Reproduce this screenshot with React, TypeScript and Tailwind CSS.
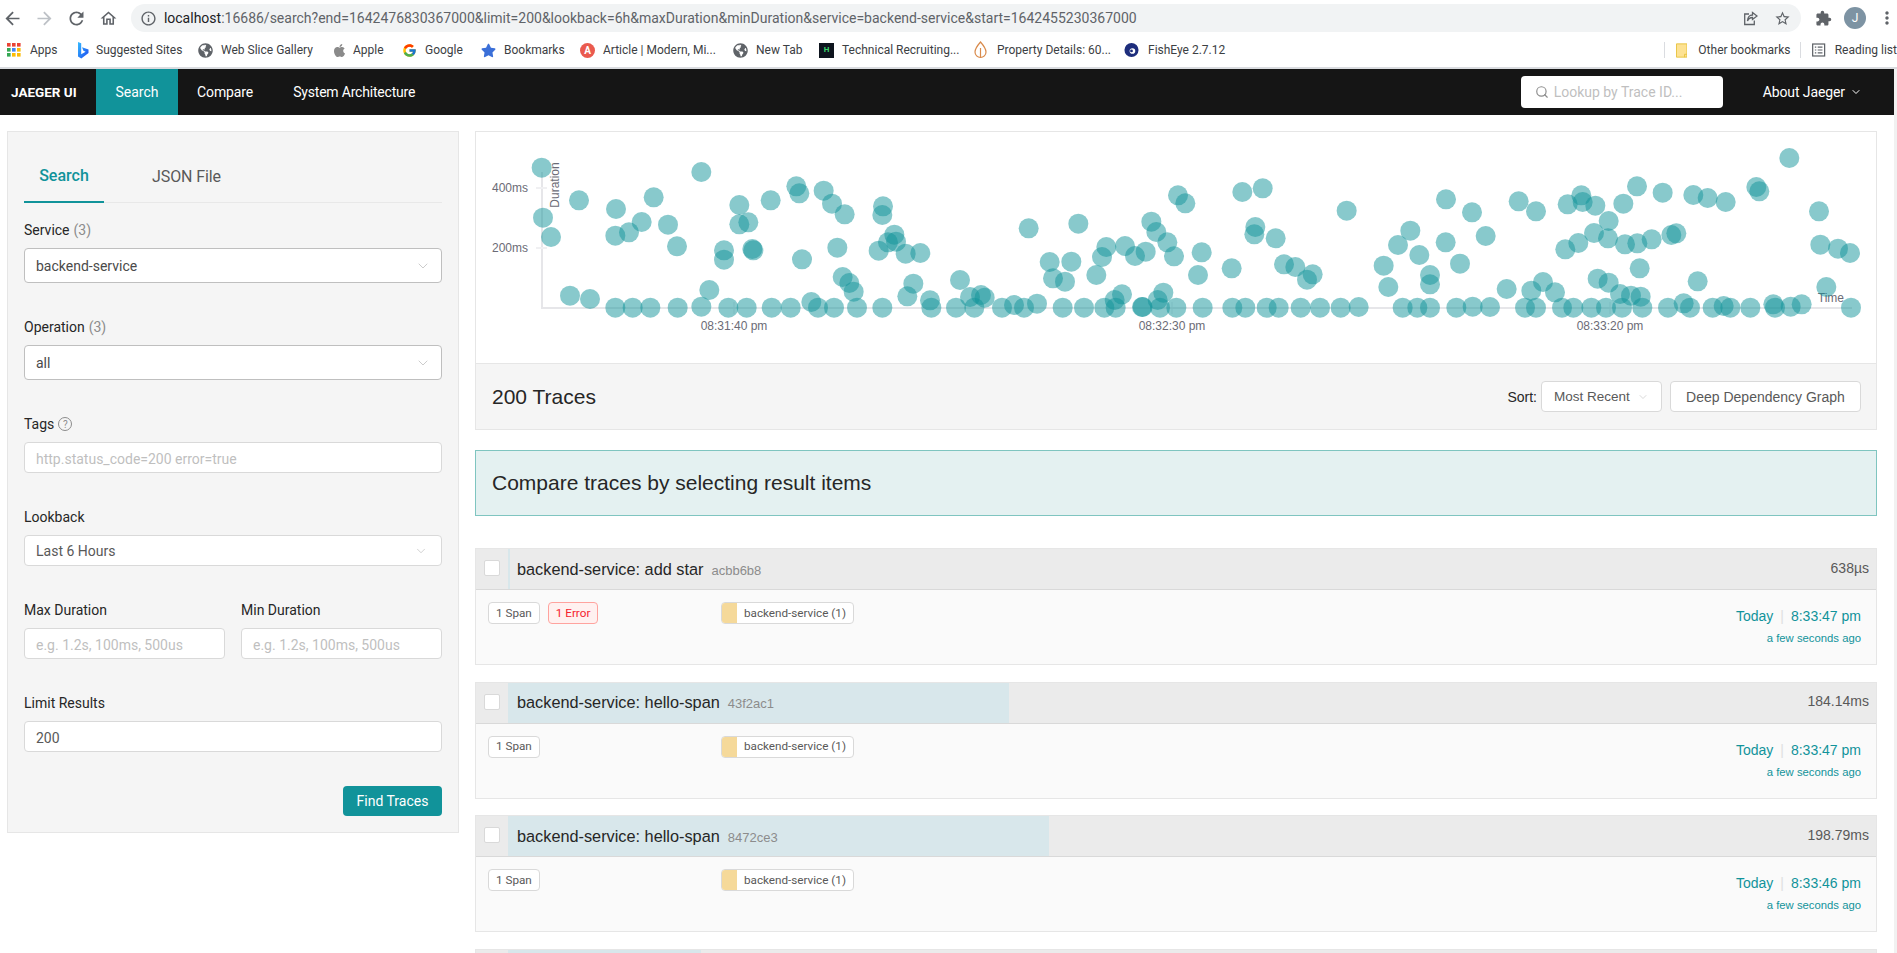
import { ChevronDown, Search } from 'lucide-react';
import { FaApple, FaGlobeAmericas, FaStar } from 'react-icons/fa';
import { FcGoogle } from 'react-icons/fc';
import { MdArrowBack, MdArrowForward, MdExtension, MdInfoOutline, MdMoreVert, MdOutlineHome, MdRefresh, MdStarBorder } from 'react-icons/md';

const ARIAL = "font-['Liberation_Sans',Arial,sans-serif]";

const AppsIcon = () => (
  <svg width="14" height="14" viewBox="0 0 14 14">
    {[0, 5, 10].map((y, r) =>
      [0, 5, 10].map((x, c) => (
        <rect key={`${r}${c}`} x={x} y={y} width="3.6" height="3.6" fill={['#ea4335', '#ea4335', '#ea4335', '#34a853', '#4285f4', '#fbbc05', '#34a853', '#fbbc05', '#fbbc05'][r * 3 + c]} />
      ))
    )}
  </svg>
);

const BingIcon = () => (
  <svg width="12" height="17" viewBox="0 0 12 17">
    <defs>
      <linearGradient id="bing" x1="0" y1="0" x2="1" y2="1">
        <stop offset="0" stopColor="#37bdff" />
        <stop offset="1" stopColor="#1b48ef" />
      </linearGradient>
    </defs>
    <path d="M1 0l3.200 1.200v11l4.400-2.500-2.200-1L5 5.200l6.500 2.300v3.600L4.300 16.500 1 14.500z" fill="url(#bing)" />
  </svg>
);

const LetterIcon = () => (
  <span className="w-[15px] h-[15px] rounded-full bg-[#ea5a4e] text-white text-[10px] font-bold flex items-center justify-center">A</span>
);

const HrIcon = () => (
  <span className="w-[15px] h-[15px] bg-[#0e141e] text-[#39d36b] text-[8px] font-bold flex items-center justify-center">H</span>
);

const LeafIcon = () => (
  <svg width="15" height="18" viewBox="0 0 15 18" fill="none" stroke="#d98a4b" strokeWidth="1.200">
    <path d="M7.500 1C4 5 2 8 2 11a5.500 5.500 0 0 0 11 0C13 8 11 5 7.500 1z" />
    <path d="M7.500 17V7" />
  </svg>
);

const FishIcon = () => (
  <svg width="16" height="18" viewBox="0 0 16 18">
    <circle cx="8" cy="9" r="7.500" fill="#1d2d7c" />
    <circle cx="9" cy="10" r="3" fill="#fff" />
    <circle cx="8" cy="10" r="1.500" fill="#1d2d7c" />
  </svg>
);

const ShareIcon = () => (
  <svg width="15" height="15" viewBox="0 0 15 15" fill="none" stroke="#5f6368" strokeWidth="1.300" className="ml-auto">
    <path d="M6 3H1.700v10.500h9.600V9.500" />
    <path d="M9.500 1.500L14 5l-4.500 3.500V6.500C7 6.500 5.500 7.500 4.500 10c0-3.500 2-6 5-6z" />
  </svg>
);

const ReadingIcon = () => (
  <svg width="14" height="14" viewBox="0 0 14 14" fill="none" stroke="#5f6368" strokeWidth="1.300" className="ml-[11px]">
    <rect x="0.700" y="0.700" width="12.600" height="12.600" />
    <path d="M3 4h1.500M3 7h1.500M3 10h1.500M6 4h5M6 7h5M6 10h5" />
  </svg>
);

const FolderIcon = () => (
  <svg width="12" height="15" viewBox="0 0 12 15" className="ml-[11px]">
    <path d="M.5.500h11v14H.5z" fill="#fde293" stroke="#e8c33f" />
    <path d="M9 14.500V11.500h2.500" fill="none" stroke="#e8c33f" />
  </svg>
);

const bookmarks = [
  { label: 'Apps', width: 'w-[69px]', gap: 'gap-[9px]', icon: <AppsIcon /> },
  { label: 'Suggested Sites', width: 'w-[123px]', gap: 'gap-[6px]', icon: <BingIcon /> },
  { label: 'Web Slice Gallery', width: 'w-[134px]', gap: 'gap-[8px]', icon: <FaGlobeAmericas size={15} color="#5f6368" /> },
  { label: 'Apple', width: 'w-[70px]', gap: 'gap-[6px]', icon: <FaApple size={15} color="#8a8a8a" /> },
  { label: 'Google', width: 'w-[79px]', gap: 'gap-[8px]', icon: <FcGoogle size={15} /> },
  { label: 'Bookmarks', width: 'w-[99px]', gap: 'gap-[8px]', icon: <FaStar size={15} color="#3b6fd8" /> },
  { label: 'Article | Modern, Mi...', width: 'w-[153px]', gap: 'gap-[8px]', icon: <LetterIcon /> },
  { label: 'New Tab', width: 'w-[86px]', gap: 'gap-[8px]', icon: <FaGlobeAmericas size={15} color="#5f6368" /> },
  { label: 'Technical Recruiting...', width: 'w-[154px]', gap: 'gap-[8px]', icon: <HrIcon /> },
  { label: 'Property Details: 60...', width: 'w-[151px]', gap: 'gap-[9px]', icon: <LeafIcon /> },
  { label: 'FishEye 2.7.12', width: 'w-[120px]', gap: 'gap-[9px]', icon: <FishIcon /> },
];

const BrowserChrome = () => (
  <div className="h-[69px] bg-white border-b-2 border-[#dadce0]">
    <div className="h-[36px] flex items-center text-[#5f6368]">
      <MdArrowBack size={21} className="ml-[2px]" />
      <MdArrowForward size={21} className="ml-[11px] text-[#bdc1c6]" />
      <MdRefresh size={21} className="ml-[11px]" />
      <MdOutlineHome size={19} className="ml-[12px]" />
      <div className="ml-[13px] w-[1672px] h-[28px] rounded-full bg-[#f1f3f4] flex items-center pl-[9px] pr-[10px]">
        <MdInfoOutline size={17} />
        <span className="ml-[7px] text-[14px] text-[#5f6368] whitespace-nowrap">
          <span className="text-[#202124]">localhost</span>:16686/search?end=1642476830367000&amp;limit=200&amp;lookback=6h&amp;maxDuration&amp;minDuration&amp;service=backend-service&amp;start=1642455230367000
        </span>
        <ShareIcon />
        <MdStarBorder size={17} className="ml-[16px]" />
      </div>
      <MdExtension size={17} className="ml-[14px]" />
      <span className="ml-[12px] w-[22px] h-[22px] rounded-full bg-[#7d93a3] text-white text-[12px] flex items-center justify-center">J</span>
      <MdMoreVert size={20} className="ml-[11px] shrink-0" />
    </div>
    <div className="h-[28px] flex items-center pl-[6px] text-[12px] text-[#3c4043] whitespace-nowrap">
      {bookmarks.map((b) => (
        <div key={b.label} className={`${b.width} ${b.gap} flex items-center shrink-0`}>
          <span className="w-[15px] flex justify-center">{b.icon}</span>
          <span>{b.label}</span>
        </div>
      ))}
      <span className="ml-[420px] w-px h-[16px] bg-[#dadce0]" />
      <FolderIcon />
      <span className="ml-[11px]">Other bookmarks</span>
      <span className="ml-[10px] w-px h-[16px] bg-[#dadce0]" />
      <ReadingIcon />
      <span className="ml-[9px]">Reading list</span>
    </div>
  </div>
);

const TopNav = () => (
  <div className="h-[46px] bg-[#151515] flex items-center text-white text-[14px]">
    <div className="w-[96px] pl-[11px] font-bold text-[13.500px]">JAEGER UI</div>
    <div className="h-full bg-[#11939a] w-[82px] flex items-center justify-center">Search</div>
    <div className="pl-[19px] pr-[20px] tracking-[-0.1px]">Compare</div>
    <div className="pl-[20px] tracking-[-0.2px]">System Architecture</div>
    <div className="ml-auto w-[202px] h-[32px] bg-white rounded-[4px] flex items-center pl-[14px] text-[#bfbfbf]">
      <Search size={14} className="text-[#8c8c8c]" />
      <span className="ml-[5px]">Lookup by Trace ID...</span>
    </div>
    <div className="ml-[40px] mr-[32px] flex items-center gap-[5px] tracking-[-0.1px]">
      About Jaeger
      <ChevronDown size={12} />
    </div>
  </div>
);

const Field = ({ label, count, children, className = '' }: { label: string; count?: string; children: React.ReactNode; className?: string }) => (
  <div className={className}>
    <div className="h-[22px] mb-[7px] flex items-center text-[14px] text-[#262626]">
      {label}
      {count && <span className="ml-[4px] text-[#8c8c8c]">{count}</span>}
      {label === 'Tags' && (
        <span className="ml-[4px] w-[14px] h-[14px] rounded-full border border-[#8c8c8c] text-[#8c8c8c] text-[10px] flex items-center justify-center">?</span>
      )}
    </div>
    {children}
  </div>
);

const SelectBox = ({ value, tall, muted }: { value: string; tall?: boolean; muted?: boolean }) => (
  <div className={`${tall ? 'h-[35px] pl-[11px] pr-[10px]' : 'h-[31px] pl-[11px] pr-[13px]'} ${muted ? 'text-[#595959] border-[#d9d9d9]' : 'text-[#4a4a4a] border-[#bfbfbf]'} bg-white border rounded-[4px] flex items-center justify-between text-[14px]`}>
    <span className="pt-[1px]">{value}</span>
    <ChevronDown size={tall ? 16 : 14} strokeWidth={1.200} className="text-[#bfbfbf]" />
  </div>
);

const TextBox = ({ placeholder, value }: { placeholder?: string; value?: string }) => (
  <input
    readOnly
    placeholder={placeholder}
    value={value ?? ''}
    className="w-full h-[31px] bg-white border border-[#d9d9d9] rounded-[4px] px-[11px] pt-[2px] text-[14px] text-[#595959] placeholder:text-[#bfbfbf] outline-none"
  />
);

const SearchPanel = () => (
  <div className="w-[452px] h-[702px] shrink-0 bg-[#f5f5f5] border border-[#e6e6e6] px-[16px]">
    <div className="mt-[28px] h-[43px] flex border-b border-[#e8e8e8] text-[16px]">
      <div className="w-[80px] h-[43px] border-b-2 border-[#11939a] text-[#11939a] font-medium flex items-center justify-center pb-[9px]">Search</div>
      <div className="ml-[48px] text-[#595959] flex items-center pb-[9px] h-[43px] tracking-[-0.1px]">JSON File</div>
    </div>
    <Field label="Service" count="(3)" className="mt-[16px]">
      <SelectBox value="backend-service" tall />
    </Field>
    <Field label="Operation" count="(3)" className="mt-[33px]">
      <SelectBox value="all" tall />
    </Field>
    <Field label="Tags" className="mt-[33px]">
      <TextBox placeholder="http.status_code=200 error=true" />
    </Field>
    <Field label="Lookback" className="mt-[33px]">
      <SelectBox value="Last 6 Hours" muted />
    </Field>
    <div className="mt-[33px] grid grid-cols-2 gap-[16px]">
      <Field label="Max Duration">
        <TextBox placeholder="e.g. 1.2s, 100ms, 500us" />
      </Field>
      <Field label="Min Duration">
        <TextBox placeholder="e.g. 1.2s, 100ms, 500us" />
      </Field>
    </div>
    <Field label="Limit Results" className="mt-[33px]">
      <TextBox value="200" />
    </Field>
    <div className="mt-[34px] flex justify-end">
      <button className="w-[99px] h-[30px] bg-[#11939a] text-white text-[14px] rounded-[4px]">Find Traces</button>
    </div>
  </div>
);

// dot centres read off at 3x, one list per horizontal slice of the chart
const dotsLeft = [
  [215, 128], [219, 278], [243, 336], [327, 226], [300, 512], [360, 522], [438, 252], [436, 332], [477, 322], [515, 291], [551, 217], [594, 299], [621, 364], [694, 141], [808, 240], [808, 298], [835, 292], [762, 376], [762, 404], [847, 372], [850, 376], [902, 226], [979, 184], [988, 205], [1061, 197], [1086, 236], [1124, 268], [1239, 244], [1237, 270], [1102, 368], [996, 403], [1226, 377], [1254, 352], [1273, 329], [1278, 350], [1307, 386], [1351, 384], [1118, 456], [1138, 474], [1151, 500], [1330, 476], [1312, 514], [1380, 526], [1384, 548], [718, 495], [1024, 531],
  [436, 548], [488, 548], [541, 548], [623, 548], [694, 545], [775, 548], [830, 548], [905, 548], [962, 548], [1044, 548], [1092, 548], [1161, 548], [1237, 548],
];
const dotsMiddle = [
  [18, 548], [73, 548], [156, 548], [222, 548], [338, 548], [402, 548], [463, 548], [497, 548], [576, 546], [578, 546], [630, 548], [679, 548], [758, 548], [847, 548], [886, 548], [950, 548], [986, 548], [1052, 548], [1110, 548], [1172, 548], [1226, 546], [1358, 548], [1402, 548], [1440, 548],
  [30, 465], [60, 516], [93, 510], [104, 518], [192, 540], [261, 536], [494, 525], [516, 508], [623, 525], [640, 503], [236, 310], [385, 296], [299, 411], [364, 410], [309, 460], [345, 470], [439, 450], [456, 396], [469, 366], [525, 363], [555, 393], [587, 380], [604, 290], [619, 321], [652, 352], [672, 394], [684, 211], [706, 235], [755, 382], [744, 450], [845, 430], [877, 201], [938, 190], [916, 306], [913, 328], [977, 340], [1002, 418], [1036, 426], [1071, 464], [1088, 448], [1190, 257], [1301, 422], [1315, 486], [1344, 360], [1381, 317], [1408, 390], [1440, 450], [1440, 478],
];
const dotsRight = [
  [79, 548], [128, 545], [180, 546], [285, 548], [318, 548], [396, 548], [430, 548], [484, 548], [528, 548], [576, 548], [637, 548], [714, 548], [780, 548], [848, 548], [881, 543], [901, 548], [961, 548], [1035, 548], [1082, 545], [1115, 538], [1263, 548],
  [48, 223], [126, 262], [47, 352], [167, 333], [90, 416], [230, 492], [304, 497], [339, 471], [375, 502], [266, 229], [318, 259], [413, 238], [454, 211], [458, 231], [496, 242], [536, 288], [580, 236], [621, 184], [698, 203], [790, 210], [833, 219], [887, 231], [979, 186], [988, 199], [1078, 99], [1167, 259], [1171, 359], [1224, 371], [1260, 384], [406, 373], [445, 354], [492, 324], [534, 340], [585, 358], [622, 355], [665, 343], [724, 330], [739, 325], [629, 430], [803, 469], [503, 461], [536, 473], [570, 507], [603, 512], [632, 515], [761, 535], [1030, 538], [1189, 486],
];

// slice origin in page x, minus the card's own left edge
const toChart = (list: number[][], originX: number) =>
  list.map(([x, y]) => ({ x: originX - 476 + x / 3, y: 125 - 132 + y / 3 }));

const dots = [...toChart(dotsLeft, 470), ...toChart(dotsMiddle, 950), ...toChart(dotsRight, 1430)];

const Chart = () => (
  <div className="h-[233px] bg-white border border-[#e6e6e6]">
    <svg width="1400" height="231" className={`block ${ARIAL}`} fontSize="12" fill="#6b6b76">
      <line x1="66" y1="40" x2="66" y2="177" stroke="#e6e6e9" strokeWidth="2" />
      <line x1="66" y1="176" x2="1376" y2="176" stroke="#e6e6e9" strokeWidth="2" />
      <line x1="60" y1="56" x2="71" y2="56" stroke="#f0f0f2" strokeWidth="2" />
      <line x1="60" y1="116" x2="71" y2="116" stroke="#f0f0f2" strokeWidth="2" />
      <text x="52" y="60" textAnchor="end">400ms</text>
      <text x="52" y="120" textAnchor="end">200ms</text>
      <text transform="translate(83 53) rotate(-90)" textAnchor="middle">Duration</text>
      <text x="1368" y="170" textAnchor="end">Time</text>
      {[258, 696, 1134].map((x, i) => (
        <g key={x}>
          <line x1={x} y1="170" x2={x} y2="182" stroke="#e6e6e9" />
          <text x={x} y="198" textAnchor="middle">{['08:31:40 pm', '08:32:30 pm', '08:33:20 pm'][i]}</text>
        </g>
      ))}
      {dots.map((d, i) => (
        <circle key={i} cx={d.x} cy={d.y} r="10" fill="#11939a" fillOpacity="0.5" />
      ))}
    </svg>
  </div>
);

const TracesHeader = () => (
  <div className="h-[66px] bg-[#f5f5f5] border-x border-b border-[#e6e6e6] flex items-center pl-[16px] pr-[15px]">
    <span className={`${ARIAL} text-[21px] text-[#262626]`}>200 Traces</span>
    <span className={`${ARIAL} ml-auto pt-[1px] text-[14px] text-[#262626]`}>Sort:</span>
    <div className={`${ARIAL} ml-[4px] w-[121px] h-[31px] pt-[1px] bg-white border border-[#d9d9d9] rounded-[4px] flex items-center justify-between pl-[12px] pr-[12px] text-[13.500px] text-[#595959]`}>
      Most Recent
      <ChevronDown size={12} strokeWidth={1.200} className="text-[#bfbfbf]" />
    </div>
    <div className={`${ARIAL} ml-[8px] w-[191px] h-[31px] pt-[1px] bg-white border border-[#d9d9d9] rounded-[4px] flex items-center justify-center text-[14px] text-[#595959]`}>
      Deep Dependency Graph
    </div>
  </div>
);

const Tag = ({ children, error }: { children: React.ReactNode; error?: boolean }) => (
  <span className={`${error ? 'bg-[#fff1f0] border-[#ffa39e] text-[#f5222d]' : 'bg-white border-[#d9d9d9] text-[#595959]'} h-[22px] px-[7px] pt-[1px] border rounded-[4px] text-[11.700px] flex items-center`}>
    {children}
  </span>
);

const TraceRow = ({ op, id, duration, barWidth, day, time, error }: { op: string; id: string; duration: string; barWidth: number; day: string; time: string; error?: boolean }) => (
  <div className="h-[117px] mb-[16.500px] border border-[#e6e6e6] bg-[#fafafa]">
    <div className="relative h-[41px] bg-[#ebebeb] border-b border-[#d9d9d9] flex items-center">
      <div className="absolute left-[32px] top-0 bottom-0 bg-[#d8e7eb]" style={{ width: barWidth }} />
      <span className="relative ml-[8px] mb-[2px] w-[16px] h-[16px] bg-white border border-[#d9d9d9] rounded-[2px]" />
      <span className={`${ARIAL} relative ml-[17px] text-[16.300px] text-[#262626]`}>
        backend-service: {op}
        <span className="ml-[8px] text-[13px] text-[#8c8c8c]">{id}</span>
      </span>
      <span className={`${ARIAL} relative ml-auto mr-[7px] mb-[2px] text-[14px] text-[#595959]`}>{duration}</span>
    </div>
    <div className="flex pt-[12px] pl-[12px] pr-[15px]">
      <div className="w-[233px] flex gap-[8px] self-start">
        <Tag>1 Span</Tag>
        {error && <Tag error>1 Error</Tag>}
      </div>
      <div className="h-[22px] pt-[0px] border border-[#d9d9d9] rounded-[4px] bg-white flex items-center text-[11.700px] text-[#595959] overflow-hidden">
        <span className="w-[15px] h-full bg-[#f5d99a]" />
        <span className="px-[7px] pt-[1px]">backend-service (1)</span>
      </div>
      <div className={`${ARIAL} ml-auto text-right text-[#11939a]`}>
        <div className="text-[14px] leading-[28px]">
          {day}
          <span className="mx-[7px] text-[#e0e0e0]">|</span>
          {time}
        </div>
        <div className="text-[11.300px] leading-[16px]">a few seconds ago</div>
      </div>
    </div>
  </div>
);

// only the top edge of the fourth result is inside the window
const TraceStub = ({ barWidth }: { barWidth: number }) => (
  <div className="relative h-[41px] bg-[#ebebeb] border border-[#e6e6e6]">
    <div className="absolute left-[32px] top-0 bottom-0 bg-[#d8e7eb]" style={{ width: barWidth }} />
  </div>
);

export default function App() {
  return (
    <div className="h-screen overflow-hidden bg-white font-[Roboto,sans-serif]">
      <BrowserChrome />
      <div className="flex">
        <div className="w-[1894px] shrink-0">
          <TopNav />
          <div className="flex pt-[16px] pl-[7px] gap-[16px]">
            <SearchPanel />
            <div className="w-[1402px]">
              <Chart />
              <TracesHeader />
              <div className={`${ARIAL} mt-[20px] mb-[32px] h-[66px] bg-[#e4f1f1] border border-[#7fc5c0] flex items-center pl-[16px] text-[21px] text-[#262626]`}>
                Compare traces by selecting result items
              </div>
              <TraceRow op="add star" id="acbb6b8" duration="638µs" barWidth={2} day="Today" time="8:33:47 pm" error />
              <TraceRow op="hello-span" id="43f2ac1" duration="184.14ms" barWidth={501} day="Today" time="8:33:47 pm" />
              <TraceRow op="hello-span" id="8472ce3" duration="198.79ms" barWidth={541} day="Today" time="8:33:46 pm" />
              <TraceStub barWidth={193} />
            </div>
          </div>
        </div>
        <div className="flex-1 bg-[#f1f1f1] h-[884px]" />
      </div>
    </div>
  );
}
